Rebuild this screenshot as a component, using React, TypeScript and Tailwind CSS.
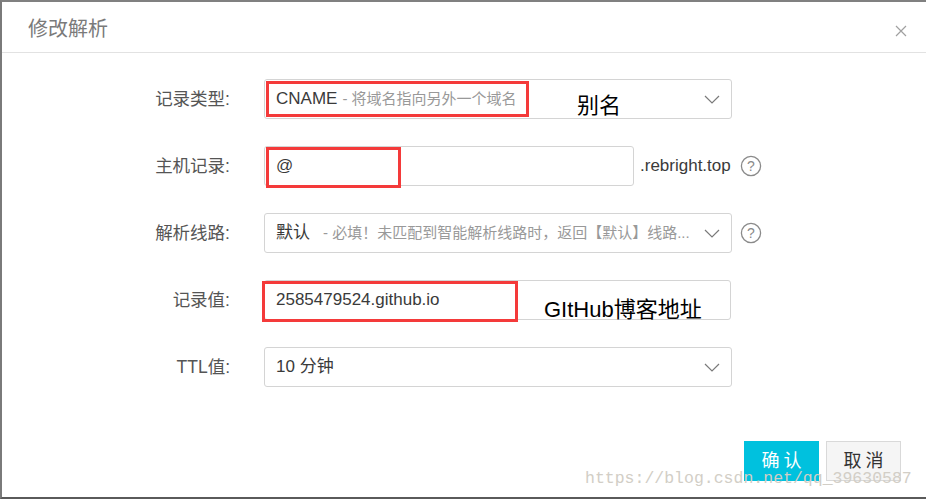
import React from "react";

const FONT = { fontFamily: '"Liberation Sans", "Noto Sans CJK SC", sans-serif' };

function Chevron() {
  return (
    <svg width="16" height="9" viewBox="0 0 16 9" className="shrink-0">
      <polyline points="1,1 8,8 15,1" fill="none" stroke="#7a7a7a" strokeWidth="1.2" />
    </svg>
  );
}

function Help() {
  return (
    <svg width="22" height="22" viewBox="0 0 22 22" className="shrink-0">
      <circle cx="11" cy="11" r="9.6" fill="none" stroke="#8a8a8a" strokeWidth="1.3" />
      <text x="11" y="16" textAnchor="middle" fontSize="14" fill="#8a8a8a" fontFamily="Liberation Sans, sans-serif">?</text>
    </svg>
  );
}

function Label({ children }: { children: React.ReactNode }) {
  return (
    <div className="w-[230px] shrink-0 text-right text-[17.5px] text-[#555] pr-[2px]">{children}</div>
  );
}

export default function App() {
  return (
    <div
      className="relative w-[926px] h-[499px] bg-white border-l-2 border-t-2 border-b-2 border-l-[#7a7a7a] border-t-[#808080] border-b-[#5a5a5a] overflow-hidden flex flex-col"
      style={FONT}
    >
      <div className="absolute top-0 left-[130px] w-[47px] h-[2px] bg-[#0f6b6e] -translate-y-[2px]" />
      {/* header */}
      <div className="h-[51px] border-b border-[#e2e2e2] flex items-center justify-between pl-[26px] pr-[19px] shrink-0">
        <div className="text-[20px] text-[#7a7a7a] mt-[4px]">修改解析</div>
        <svg width="12" height="12" viewBox="0 0 12 12" className="mt-[7px]">
          <path d="M1 1 L11 11 M11 1 L1 11" stroke="#a0a0a0" strokeWidth="1.2" />
        </svg>
      </div>

      {/* form */}
      <div className="flex flex-col gap-[27px] pt-[26px]">
        {/* row 1 */}
        <div className="flex items-center h-[40px]">
          <Label>记录类型:</Label>
          <div className="relative ml-[32px] w-[468px] h-[40px] border border-[#d4d4d4] rounded-[3px] flex items-center pl-[11px] pr-[11px]">
            <div className="flex-1 flex items-baseline whitespace-nowrap">
              <span className="text-[17px] text-[#3a3a3a]">CNAME</span>
              <span className="ml-[5px] text-[15px] text-[#999]">- 将域名指向另外一个域名</span>
            </div>
            <Chevron />
            <div className="absolute left-[1px] top-[1px] w-[263px] h-[36px] border-[3px] border-[#f43a3a]" />
            <div className="absolute left-[312px] top-[10px] text-[22px] leading-[26px] text-black" style={{ fontFamily: '"Noto Sans CJK SC", sans-serif' }}>别名</div>
          </div>
        </div>

        {/* row 2 */}
        <div className="flex items-center h-[40px]">
          <Label>主机记录:</Label>
          <div className="relative ml-[32px] w-[370px] h-[40px] border border-[#d4d4d4] rounded-[3px] flex items-center pl-[11px]">
            <span className="text-[17px] text-[#3a3a3a]">@</span>
            <div className="absolute left-[1px] top-[0px] w-[135px] h-[41px] border-[3px] border-[#f43a3a]" />
          </div>
          <span className="ml-[6px] text-[17px] text-[#3a3a3a]">.rebright.top</span>
          <div className="ml-[9px]"><Help /></div>
        </div>

        {/* row 3 */}
        <div className="flex items-center h-[40px]">
          <Label>解析线路:</Label>
          <div className="ml-[32px] w-[468px] h-[40px] border border-[#d4d4d4] rounded-[3px] flex items-center pl-[11px] pr-[11px]">
            <div className="flex-1 flex items-baseline whitespace-nowrap overflow-hidden">
              <span className="text-[17px] text-[#3a3a3a]">默认</span>
              <span className="ml-[13px] text-[15px] text-[#999]">- 必填！未匹配到智能解析线路时，返回【默认】线路...</span>
            </div>
            <Chevron />
          </div>
          <div className="ml-[8px]"><Help /></div>
        </div>

        {/* row 4 */}
        <div className="flex items-center h-[40px]">
          <Label>记录值:</Label>
          <div className="relative ml-[32px] w-[467px] h-[40px] border border-[#d4d4d4] rounded-[3px] flex items-center pl-[11px]">
            <span className="text-[17px] text-[#3a3a3a]">2585479524.github.io</span>
            <div className="absolute left-[-3px] top-[0px] w-[256px] h-[41px] border-[3px] border-[#f43a3a]" />
            <div className="absolute left-[279px] top-[16px] text-[22px] leading-[26px] text-black whitespace-nowrap">GItHub博客地址</div>
          </div>
        </div>

        {/* row 5 */}
        <div className="flex items-center h-[40px]">
          <Label>TTL值:</Label>
          <div className="ml-[32px] w-[468px] h-[40px] border border-[#d4d4d4] rounded-[3px] flex items-center pl-[11px] pr-[11px]">
            <div className="flex-1 text-[17px] text-[#3a3a3a]">10 分钟</div>
            <Chevron />
          </div>
        </div>
      </div>

      {/* buttons */}
      <div className="flex justify-end gap-[7px] pr-[25px] mt-[54px]">
        <div className="w-[75px] h-[40px] bg-[#00c1de] text-white text-[18px] tracking-[4px] pl-[4px] flex items-center justify-center">确认</div>
        <div className="w-[75px] h-[40px] bg-[#f5f5f5] border border-[#d9d9d9] text-[#333] text-[18px] tracking-[4px] pl-[4px] flex items-center justify-center">取消</div>
      </div>

      <div
        className="absolute left-[583px] top-[466px] text-[16.5px] text-[#d2cec6] whitespace-nowrap leading-[22px]"
        style={{ fontFamily: '"Liberation Mono", monospace' }}
      >
        https://blog.csdn.net/qq_39630587
      </div>
    </div>
  );
}
